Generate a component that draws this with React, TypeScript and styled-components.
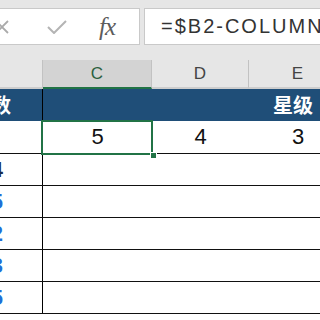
import React from "react";
import styled, { createGlobalStyle } from "styled-components";

const GlobalStyle = createGlobalStyle`
  html, body {
    margin: 0;
    padding: 0;
    width: 320px;
    height: 320px;
    overflow: hidden;
    background: #ffffff;
    font-family: "Liberation Sans", Arial, sans-serif;
  }
`;

const COLS = "103px 109px 97px 98px";

const Page = styled.div`
  width: 320px;
  height: 320px;
  overflow: hidden;
  background: #ffffff;
  display: flex;
  flex-direction: column;
`;

const FormulaBar = styled.div`
  height: 46px;
  box-sizing: border-box;
  padding-top: 8px;
  background: #e6e6e6;
  display: flex;
  gap: 4px;
  flex-shrink: 0;
`;

const ActionBox = styled.div`
  width: 161px;
  height: 37px;
  margin-left: -21px;
  box-sizing: border-box;
  background: #ffffff;
  border: 1px solid #c9c9c9;
  display: flex;
  align-items: center;
  padding-left: 15px;
  flex-shrink: 0;
`;

const IconSlot = styled.span<{ $gap: number }>`
  display: inline-flex;
  align-items: center;
  margin-left: ${(p) => p.$gap}px;
`;

const Fx = styled.span`
  font-family: "Liberation Serif", "Times New Roman", serif;
  font-style: italic;
  font-size: 25px;
  color: #5c5c5c;
  letter-spacing: -1px;
  line-height: 1;
`;

const FormulaInput = styled.div`
  flex: 1;
  height: 37px;
  box-sizing: border-box;
  background: #ffffff;
  border: 1px solid #c9c9c9;
  border-right: none;
  padding-left: 16px;
  display: flex;
  align-items: center;
  font-size: 20px;
  letter-spacing: 2px;
  color: #333333;
  white-space: nowrap;
  overflow: hidden;
`;

const Strip = styled.div`
  height: 14px;
  background: #e6e6e6;
  flex-shrink: 0;
`;

const Grid = styled.div`
  margin-left: -60px;
  width: 407px;
  flex-shrink: 0;
  display: flex;
  flex-direction: column;
`;

const ColHeaderRow = styled.div`
  display: grid;
  grid-template-columns: ${COLS};
  height: 29px;
  background: #e6e6e6;
`;

const ColHeader = styled.div<{ $selected?: boolean }>`
  box-sizing: border-box;
  display: flex;
  align-items: center;
  justify-content: center;
  font-size: 17px;
  color: ${(p) => (p.$selected ? "#2b5f3f" : "#444444")};
  background: ${(p) => (p.$selected ? "#d3d3d3" : "#e6e6e6")};
  border-right: 1px solid #c2c2c2;
  border-bottom: 2px solid ${(p) => (p.$selected ? "#217346" : "#cdcdcd")};
`;

const TitleRow = styled.div`
  display: grid;
  grid-template-columns: ${COLS};
  height: 32px;
  background: #1f4e78;
  color: #ffffff;
  font-family: "Noto Sans CJK SC", "Liberation Sans", sans-serif;
  font-weight: 700;
  font-size: 20px;
`;

const TitleCell = styled.div<{ $merged?: boolean }>`
  box-sizing: border-box;
  display: flex;
  align-items: center;
  justify-content: ${(p) => (p.$merged ? "flex-end" : "center")};
  grid-column: ${(p) => (p.$merged ? "2 / 5" : "auto")};
  padding-right: ${(p) => (p.$merged ? "34px" : "0")};
  border-right: ${(p) => (p.$merged ? "none" : "1px solid #000")};
  line-height: 1;
`;

const DataRow = styled.div<{ $h: number }>`
  display: grid;
  grid-template-columns: ${COLS};
  height: ${(p) => p.$h}px;
  box-sizing: border-box;
  border-bottom: 1px solid #111111;
`;

const KeyCell = styled.div<{ $color: string }>`
  box-sizing: border-box;
  border-right: 1px solid #000000;
  display: flex;
  align-items: center;
  justify-content: flex-end;
  padding-right: 39px;
  font-size: 22px;
  font-weight: 700;
  color: ${(p) => p.$color};
`;

const ValueCell = styled.div`
  position: relative;
  display: flex;
  align-items: center;
  justify-content: center;
  font-size: 22px;
  color: #111111;
`;

const SelectionFrame = styled.div`
  position: absolute;
  left: -2px;
  top: -1px;
  right: -1px;
  bottom: -2px;
  border: 2px solid #217346;
  pointer-events: none;
`;

const FillHandle = styled.div`
  position: absolute;
  right: -5px;
  bottom: -6px;
  width: 7px;
  height: 7px;
  background: #217346;
  border: 1px solid #ffffff;
  box-sizing: border-box;
`;

const WideCell = styled.div`
  grid-column: 2 / 5;
`;

const keyValues: { v: string; c: string }[] = [
  { v: "4", c: "#1b2a4a" },
  { v: "5", c: "#1f6fd6" },
  { v: "2", c: "#1f6fd6" },
  { v: "3", c: "#1f6fd6" },
  { v: "5", c: "#1f6fd6" },
];

export default function App() {
  return (
    <Page>
      <GlobalStyle />
      <FormulaBar>
        <ActionBox>
          <IconSlot $gap={0}>
            <svg width="14" height="14" viewBox="0 0 14 14">
              <path d="M1 1 L13 13 M13 1 L1 13" stroke="#aaaaaa" strokeWidth="1.8" fill="none" />
            </svg>
          </IconSlot>
          <IconSlot $gap={38}>
            <svg width="20" height="14" viewBox="0 0 20 14">
              <path d="M1 7 L7 13 L19 1" stroke="#b4b4b4" strokeWidth="2" fill="none" />
            </svg>
          </IconSlot>
          <IconSlot $gap={32}>
            <Fx>fx</Fx>
          </IconSlot>
        </ActionBox>
        <FormulaInput>=$B2-COLUMN()+3</FormulaInput>
      </FormulaBar>
      <Strip />
      <Grid>
        <ColHeaderRow>
          <ColHeader>B</ColHeader>
          <ColHeader $selected>C</ColHeader>
          <ColHeader>D</ColHeader>
          <ColHeader>E</ColHeader>
        </ColHeaderRow>
        <TitleRow>
          <TitleCell>分数</TitleCell>
          <TitleCell $merged>星级</TitleCell>
        </TitleRow>
        <DataRow $h={33}>
          <KeyCell $color="#1f6fd6" />
          <ValueCell>
            5
            <SelectionFrame />
            <FillHandle />
          </ValueCell>
          <ValueCell>4</ValueCell>
          <ValueCell>3</ValueCell>
        </DataRow>
        {keyValues.map((k, i) => (
          <DataRow $h={32} key={i}>
            <KeyCell $color={k.c}>{k.v}</KeyCell>
            <WideCell />
          </DataRow>
        ))}
      </Grid>
    </Page>
  );
}
